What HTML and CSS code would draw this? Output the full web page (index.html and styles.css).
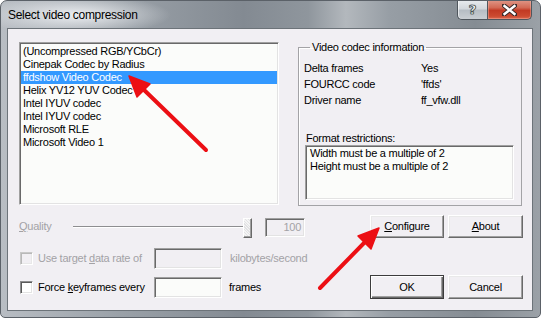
FILE: index.html
```html
<!DOCTYPE html>
<html>
<head>
<meta charset="utf-8">
<title>Select video compression</title>
<link rel="stylesheet" href="styles.css">
</head>
<body>
<div class="window">
  <div class="titlebar">
    <span class="title">Select video compression</span>
    <div class="caption-btns">
      <div class="cbtn help"><span>?</span></div>
      <div class="cbtn close">
        <svg width="15" height="12" viewBox="0 0 15 12">
          <path d="M2 1.5 L13 10.5 M13 1.5 L2 10.5" stroke="#3a2a28" stroke-width="4.4" stroke-linecap="square"/>
          <path d="M2.5 2 L12.5 10 M12.5 2 L2.5 10" stroke="#ffffff" stroke-width="2.4" stroke-linecap="square"/>
        </svg>
      </div>
    </div>
  </div>
  <div class="client">
    <div class="top">
      <div class="listbox">
        <div class="item">(Uncompressed RGB/YCbCr)</div>
        <div class="item">Cinepak Codec by Radius</div>
        <div class="item selected">ffdshow Video Codec</div>
        <div class="item">Helix YV12 YUV Codec</div>
        <div class="item">Intel IYUV codec</div>
        <div class="item">Intel IYUV codec</div>
        <div class="item">Microsoft RLE</div>
        <div class="item">Microsoft Video 1</div>
      </div>
      <fieldset class="group">
        <legend>Video codec information</legend>
        <div class="info">
          <span>Delta frames</span><span>Yes</span>
          <span>FOURCC code</span><span>'ffds'</span>
          <span>Driver name</span><span>ff_vfw.dll</span>
        </div>
        <div class="fr-label">Format restrictions:</div>
        <div class="restrict">Width must be a multiple of 2<br>Height must be a multiple of 2</div>
      </fieldset>
    </div>

    <div class="row r1">
      <span class="quality disabled"><u>Q</u>uality</span>
      <div class="slider"><div class="track"></div><div class="thumb"></div></div>
      <div class="edit qedit">100</div>
      <div class="btns">
        <div class="btn"><span><u>C</u>onfigure</span></div>
        <div class="btn"><span><u>A</u>bout</span></div>
      </div>
    </div>

    <div class="row r2">
      <div class="chk-area">
        <div class="chk off"></div>
        <span class="chk-label disabled">Use target <u>d</u>ata rate of</span>
      </div>
      <div class="edit e2"></div>
      <span class="after disabled">kilobytes/second</span>
    </div>

    <div class="row r3">
      <div class="chk-area">
        <div class="chk"></div>
        <span class="chk-label">Force <u>k</u>eyframes every</span>
      </div>
      <div class="edit e3 white"></div>
      <span class="after frames">frames</span>
      <div class="btns">
        <div class="btn default"><span>OK</span></div>
        <div class="btn"><span>Cancel</span></div>
      </div>
    </div>
  </div>

  <svg class="arrows" width="541" height="318" viewBox="0 0 541 318">
    <g fill="#ec0f14" stroke="#ec0f14">
      <line x1="206" y1="150" x2="141" y2="87" stroke-width="4" stroke-linecap="round"/>
      <polygon points="129,76 150,84 137,97" stroke-width="1.5" stroke-linejoin="round"/>
      <line x1="320" y1="288" x2="366" y2="241" stroke-width="4" stroke-linecap="round"/>
      <polygon points="379,228 371,249 358,236" stroke-width="1.5" stroke-linejoin="round"/>
    </g>
  </svg>
</div>
</body>
</html>
```

FILE: styles.css
```css
html, body {
  margin: 0;
  padding: 0;
  background: #ffffff;
}

.window {
  position: relative;
  width: 541px;
  height: 318px;
  box-sizing: border-box;
  display: flex;
  flex-direction: column;
  border: 1px solid #5b6168;
  border-radius: 7px 7px 5px 5px;
  overflow: hidden;
  background:
    radial-gradient(ellipse 95px 20px at 75px 14px, rgba(240, 242, 245, 0.95), rgba(240, 242, 245, 0) 100%),
    linear-gradient(to right, #b8bdc3 0%, #9aa1a8 22%, #838a92 45%, #8f969d 57%, #b3b8bd 64%, #979ea5 72%, #858c93 88%, #9ba1a7 100%);
  font-family: "Liberation Sans", Arial, sans-serif;
  font-size: 11px;
  letter-spacing: -0.25px;
  color: #000;
}

/* ---------- title bar ---------- */
.titlebar {
  height: 28px;
  display: flex;
  align-items: flex-start;
  flex: none;
}

.title {
  padding-left: 7px;
  line-height: 28px;
  font-family: "Liberation Sans", Arial, sans-serif;
  font-size: 12px;
  letter-spacing: -0.3px;
  color: #000;
}

.caption-btns {
  margin-left: auto;
  margin-right: 8px;
  display: flex;
  margin-top: -1px;
}

.cbtn {
  height: 20px;
  box-sizing: border-box;
  border: 1px solid #4f565d;
  border-top: none;
  display: flex;
  align-items: center;
  justify-content: center;
}

.cbtn.help {
  width: 30px;
  border-radius: 0 0 0 5px;
  border-right: none;
  background: linear-gradient(to bottom, #e9ecef 0%, #d3d8dd 45%, #b6bdc4 55%, #c9ced3 100%);
  box-shadow: inset 1px 0 0 rgba(255,255,255,0.6);
}

.cbtn.help span {
  font-family: "DejaVu Sans", sans-serif;
  font-weight: bold;
  font-size: 13px;
  line-height: 13px;
  letter-spacing: 0;
  color: #ffffff;
  -webkit-text-stroke: 0.6px #3a3f45;
  text-shadow: 0 0 1px #3a3f45, 0 0 1px #3a3f45;
}

.cbtn.close {
  width: 45px;
  border-radius: 0 0 5px 0;
  background: linear-gradient(to bottom, #e09888 0%, #d26a55 40%, #c23a24 55%, #cc4a30 85%, #db6a50 100%);
  box-shadow: inset 0 0 0 1px rgba(255, 200, 190, 0.35);
}

/* ---------- client ---------- */
.client {
  flex: 1;
  margin: 0 8px 7px 7px;
  background: #f1eff3;
  box-shadow: 0 0 0 1px #6c7379;
  display: flex;
  flex-direction: column;
  padding: 12px 9px 0 11px;
  box-sizing: border-box;
}

.top {
  display: flex;
  align-items: flex-start;
  height: 165px;
  flex: none;
}

.listbox {
  width: 260px;
  height: 163px;
  margin-top: 1px;
  box-sizing: border-box;
  background: #fbfcfa;
  border-style: solid;
  border-width: 1px;
  border-color: #a0a0a0 #ffffff #ffffff #a0a0a0;
  box-shadow: inset 1px 1px 0 #696969, inset -1px -1px 0 #e3e3e3;
  padding: 2px 1px 0 1px;
  line-height: 13px;
}

.item {
  height: 13px;
  padding-left: 2px;
  white-space: nowrap;
}

.item.selected {
  background: #3399ff;
  color: #ffffff;
}

.group {
  margin: 0 0 0 19px;
  width: 224px;
  box-sizing: border-box;
  border: 1px solid #a3a3a6;
  box-shadow: inset 1px 1px 0 #ffffff;
  padding: 6px 7px 5px 5px;
  min-width: 0;
}

.group legend {
  margin-left: 6px;
  padding: 0 2px;
  line-height: 13px;
  font-size: 11px;
}

.info {
  display: grid;
  grid-template-columns: 117px auto;
  grid-auto-rows: 16px;
  align-items: center;
}

.fr-label {
  margin-top: 24px;
  margin-left: 2px;
  line-height: 13px;
}

.restrict {
  margin-left: 1px;
  width: 209px;
  height: 55px;
  box-sizing: border-box;
  background: #fbfcfa;
  border-style: solid;
  border-width: 1px;
  border-color: #a0a0a0 #ffffff #ffffff #a0a0a0;
  box-shadow: inset 1px 1px 0 #696969, inset -1px -1px 0 #e3e3e3;
  padding: 1px 3px 0 4px;
  line-height: 13px;
}

/* ---------- bottom rows ---------- */
.row {
  display: flex;
  align-items: center;
  flex: none;
}

.r1 { height: 23px; margin-top: 9px; }
.r2 { height: 21px; margin-top: 10px; }
.r3 { height: 24px; margin-top: 6px; }

.disabled { color: #a3a2a6; }

.quality {
  width: 54px;
  line-height: 13px;
}

.slider {
  width: 179px;
  height: 20px;
  display: flex;
  align-items: center;
  margin-top: 3px;
}

.track {
  flex: 1;
  height: 0;
  border-top: 1px solid #8e8e90;
  border-bottom: 1px solid #ffffff;
  margin-top: -2px;
}

.thumb {
  width: 9px;
  height: 20px;
  box-sizing: border-box;
  border-style: solid;
  border-width: 1px;
  border-color: #ffffff #696969 #696969 #ffffff;
  box-shadow: inset -1px -1px 0 #a0a0a0;
  background: repeating-linear-gradient(45deg, #f4f4f4 0 1px, #e2e2e4 1px 2px);
}

.edit {
  box-sizing: border-box;
  border-style: solid;
  border-width: 1px;
  border-color: #a0a0a0 #ffffff #ffffff #a0a0a0;
  box-shadow: inset 1px 1px 0 #696969, inset -1px -1px 0 #e3e3e3;
  background: #f1eff3;
}

.edit.white { background: #fbfcfa; }

.qedit {
  width: 40px;
  height: 19px;
  margin-left: 13px;
  margin-top: 1px;
  color: #a3a2a6;
  text-align: right;
  padding-right: 3px;
  line-height: 17px;
}

.e2 { width: 68px; height: 21px; }
.e3 { width: 68px; height: 21px; margin-top: 1px; }

.chk-area {
  width: 135px;
  display: flex;
  align-items: center;
}

.chk {
  width: 13px;
  height: 13px;
  box-sizing: border-box;
  margin-left: 1px;
  border-style: solid;
  border-width: 1px;
  border-color: #8e8e90 #ffffff #ffffff #8e8e90;
  box-shadow: inset 1px 1px 0 #5a5a5a, inset -1px -1px 0 #e3e3e3;
  background: #ffffff;
}

.chk.off {
  border-color: #c8c8c8 #ffffff #ffffff #c8c8c8;
  box-shadow: inset 1px 1px 0 #b8b8b8, inset -1px -1px 0 #e8e8e8;
  background: #f1eff3;
  margin-top: -1px;
}

.chk-label {
  margin-left: 5px;
  line-height: 13px;
  white-space: nowrap;
}

.after {
  margin-left: 8px;
  line-height: 13px;
}

.after.frames { margin-left: 7px; }

.btns {
  margin-left: auto;
  display: flex;
  gap: 4px;
}

.r1 .btns { height: 23px; }

.btn {
  box-sizing: border-box;
  height: 23px;
  display: flex;
  align-items: center;
  justify-content: center;
  background: #f1eff3;
  border-style: solid;
  border-width: 1px;
  border-color: #ffffff #696969 #696969 #ffffff;
  box-shadow: inset -1px -1px 0 #a0a0a0, inset 1px 1px 0 #e9e9e9;
  line-height: 13px;
}

.btns .btn:first-child { width: 74px; }
.btns .btn:last-child { width: 75px; }

.r3 .btn { height: 24px; }

.btn.default {
  border-color: #3c3c3c;
  box-shadow: inset 1px 1px 0 #ffffff, inset -1px -1px 0 #696969, inset -2px -2px 0 #a0a0a0;
}

u {
  text-decoration: underline;
  text-underline-offset: 1px;
}

/* ---------- annotation arrows ---------- */
.arrows {
  position: absolute;
  left: -1px;
  top: -1px;
  pointer-events: none;
}
```
